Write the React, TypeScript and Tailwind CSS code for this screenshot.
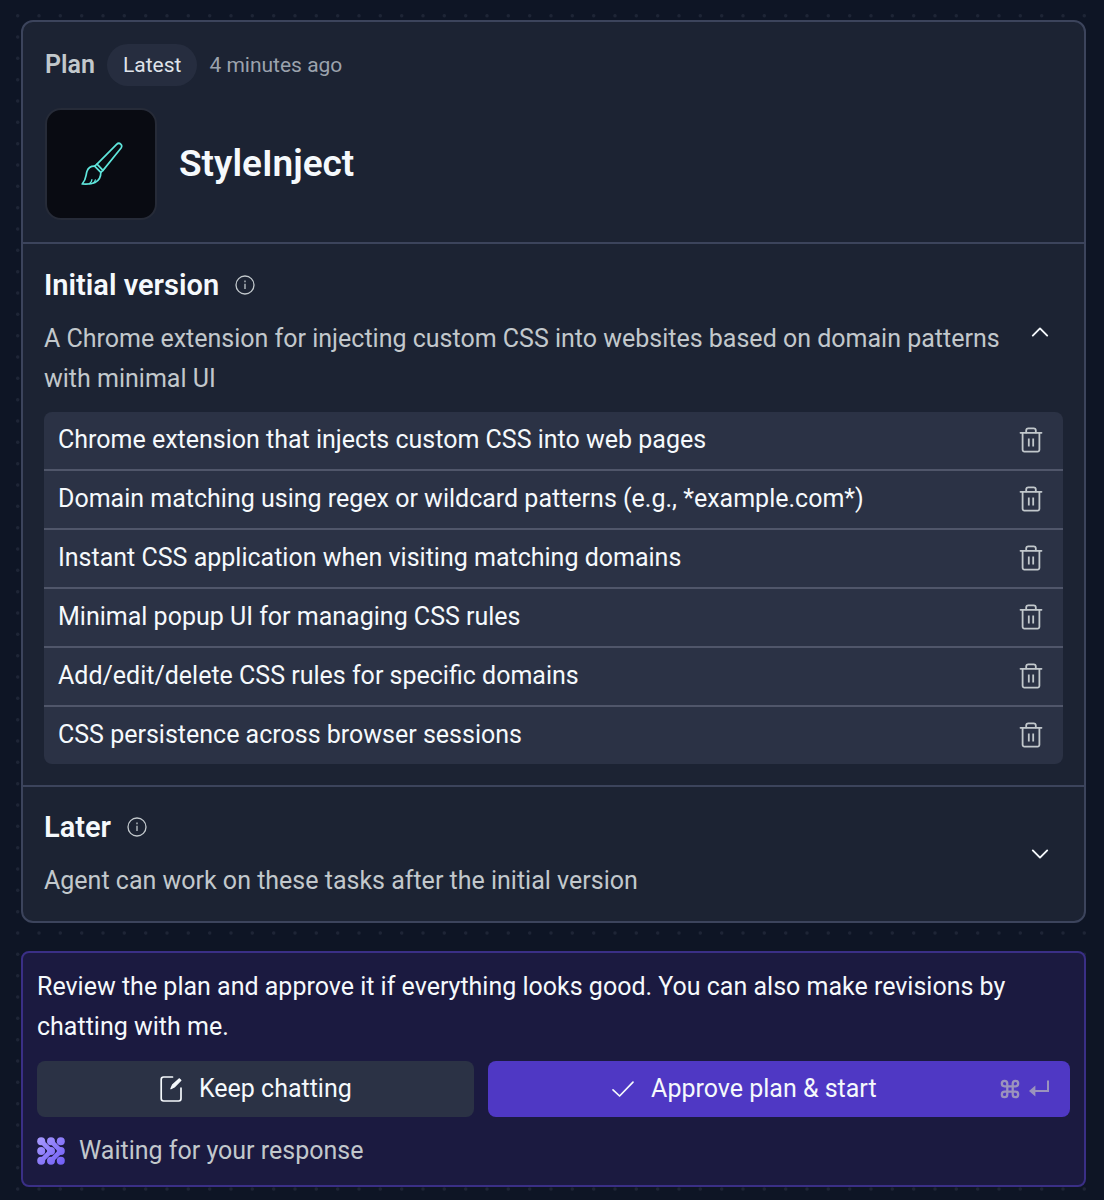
import React, { useState } from 'react';

const INITIAL_FEATURES = [
  'Chrome extension that injects custom CSS into web pages',
  'Domain matching using regex or wildcard patterns (e.g., *example.com*)',
  'Instant CSS application when visiting matching domains',
  'Minimal popup UI for managing CSS rules',
  'Add/edit/delete CSS rules for specific domains',
  'CSS persistence across browser sessions',
];

interface IconProps {
  className?: string;
}

const InfoIcon: React.FC<IconProps> = ({ className }) => (
  <svg viewBox="0 0 20 20" className={className} fill="none" stroke="currentColor" strokeWidth="1.3" aria-hidden="true">
    <circle cx="10" cy="10" r="9" />
    <path d="M10 8.8v5.2" />
    <path d="M10 5.6v1.6" />
  </svg>
);

const TrashIcon: React.FC<IconProps> = ({ className }) => (
  <svg viewBox="0 0 24 28" className={className} fill="none" stroke="currentColor" strokeWidth="1.8" strokeLinecap="round" strokeLinejoin="round" aria-hidden="true">
    <path d="M1.5 6.8h21" />
    <path d="M3.6 6.8v17a1.8 1.8 0 0 0 1.8 1.8h13.2a1.8 1.8 0 0 0 1.8-1.8v-17" />
    <path d="M7.2 6.4V4.6a2.2 2.2 0 0 1 2.2-2.2h5.2a2.2 2.2 0 0 1 2.2 2.2v1.8" />
    <path d="M9.8 12.4v8M14.2 12.4v8" strokeLinecap="butt" />
  </svg>
);

const ChevronIcon: React.FC<{ up?: boolean }> = ({ up }) => (
  <svg viewBox="0 0 20 12" className="w-5 h-3" fill="none" stroke="currentColor" strokeWidth="1.9" strokeLinecap="round" strokeLinejoin="round" aria-hidden="true">
    <path d={up ? 'M2.8 9.6 10 2.4l7.2 7.2' : 'M2.8 2.4 10 9.6l7.2-7.2'} />
  </svg>
);

const BrushIcon: React.FC<IconProps> = ({ className }) => (
  <svg viewBox="0 0 44 46" className={className} fill="none" stroke="#5fe6dc" strokeWidth="1.7" strokeLinecap="round" strokeLinejoin="round" aria-hidden="true">
    <path d="M18 23.2 37.6 3.4c1.2-1.2 3-1.300 4.100-.3s1.200 2.800.2 4.200L24 29.400z" />
    <path d="M18 23.200l-2.400 1.900 6.200 6.300 2.200-2" />
    <path d="M15.600 25.100c-3.600-.1-6.600 2-7.700 5.400-1.300 4.200-.4 7.800-4.700 12.500 3.900.3 9.300.2 12.900-1.600 3.800-2 5.800-5.600 5.700-10" />
    <path d="M10.500 42.600c1.500-1 2.300-2.300 2.400-4M14.600 41.800c1-.9 1.500-1.700 1.700-2.800" strokeWidth="1.300" />
  </svg>
);

const ComposeIcon: React.FC<IconProps> = ({ className }) => (
  <svg viewBox="0 0 24 28" className={className} fill="none" stroke="currentColor" strokeLinecap="round" strokeLinejoin="round" aria-hidden="true">
    <path d="M13.500 2H4.600a2.400 2.400 0 0 0-2.400 2.400v19.200A2.400 2.400 0 0 0 4.600 26h15a2.400 2.400 0 0 0 2.400-2.400V13.200" strokeWidth="1.700" />
    <path d="M11.900 13.800l1.600-3.800 6.900-6.200 1.500 1.500-6.600 6.700z" fill="currentColor" strokeWidth="1.200" />
  </svg>
);

const CheckIcon: React.FC<IconProps> = ({ className }) => (
  <svg viewBox="0 0 24 18" className={className} fill="none" stroke="currentColor" strokeWidth="1.7" strokeLinecap="round" strokeLinejoin="round" aria-hidden="true">
    <path d="M2 9.800 8.600 16 22 2.200" />
  </svg>
);

const CommandIcon: React.FC<IconProps> = ({ className }) => (
  <svg viewBox="0 0 22 22" className={className} fill="none" stroke="currentColor" strokeWidth="2.500" aria-hidden="true">
    <path d="M8 8H5a3 3 0 1 1 3-3zM14 8V5a3 3 0 1 1 3 3zM14 14h3a3 3 0 1 1-3 3zM8 14v3a3 3 0 1 1-3-3zM8 8h6v6H8z" />
  </svg>
);

const ReturnIcon: React.FC<IconProps> = ({ className }) => (
  <svg viewBox="0 0 22 18" className={className} fill="none" stroke="currentColor" strokeWidth="2" aria-hidden="true">
    <path d="M20 .5v10.500H5" />
    <path d="M7.400 5.400 1 11l6.400 5.600z" fill="currentColor" stroke="none" />
  </svg>
);

// 3x3 dots, some of them joined diagonally
const AgentIcon: React.FC<IconProps> = ({ className }) => (
  <svg viewBox="0 0 28 28" className={className} aria-hidden="true">
    <defs>
      <linearGradient id="agent" x1="0" y1="0" x2="28" y2="28" gradientUnits="userSpaceOnUse">
        <stop offset="0" stopColor="#a99bff" />
        <stop offset="1" stopColor="#6f5cf5" />
      </linearGradient>
    </defs>
    <g fill="url(#agent)">
      {[4.2, 14, 23.8].map(cy => [4.2, 14, 23.8].map(cx => (
        <circle key={`${cx}-${cy}`} cx={cx} cy={cy} r="4" />
      )))}
    </g>
    <path d="M4.200 4.200 14 14l-9.800 9.800M14 4.200l9.800 9.800-9.800 9.800" fill="none" stroke="url(#agent)" strokeWidth="4.600" />
  </svg>
);

// three dots per 64px in each direction
const DotGrid = () => (
  <svg className="absolute inset-0 w-full h-full" aria-hidden="true">
    <defs>
      <pattern id="dots" x="7" y="5" width="64" height="64" patternUnits="userSpaceOnUse">
        {[10.7, 32, 53.3].map(y => [10.7, 32, 53.3].map(x => (
          <circle key={`${x}-${y}`} cx={x} cy={y} r="1.7" fill="#1e2536" />
        )))}
      </pattern>
    </defs>
    <rect width="100%" height="100%" fill="url(#dots)" />
  </svg>
);

const App: React.FC = () => {
  const [features, setFeatures] = useState(INITIAL_FEATURES);
  const [initialOpen, setInitialOpen] = useState(true);
  const [laterOpen, setLaterOpen] = useState(false);

  const removeFeature = (feature: string) => {
    setFeatures(features.filter(f => f !== feature));
  };

  return (
    <div className="relative min-h-screen bg-[#0e1525] text-[#f5f9fc] font-['Roboto',sans-serif] text-[25px] leading-10">
      <DotGrid />
      <main className="relative pt-5 pb-3 pl-[21px] pr-[18px] flex flex-col gap-7">
        <article className="rounded-xl border-2 border-[#3c445c] bg-[#1c2333]">
          <header className="p-[22px]">
            <div className="flex items-center gap-3 text-[21px]">
              <span className="text-[25px] font-semibold text-[#c2c8cc]">Plan</span>
              <span className="rounded-full bg-[#2b3245]/70 px-4 py-px text-[#dfe3ea]">Latest</span>
              <span className="text-[#9ba2ad]">4 minutes ago</span>
            </div>
            <div className="mt-[22px] flex items-center gap-[22px]">
              <div className="flex size-28 items-center justify-center rounded-2xl border-2 border-[#262b38] bg-[#090b12]">
                <BrushIcon className="w-11 h-[46px]" />
              </div>
              <h1 className="text-[37px] font-semibold">StyleInject</h1>
            </div>
          </header>

          <section className="border-t-2 border-[#3c445c] p-[21px]">
            <div className="flex items-center gap-2">
              <div className="flex-1">
                <h2 className="flex items-center gap-4 text-[29px] font-semibold">
                  Initial version
                  <InfoIcon className="size-5 text-[#c2c8cc]" />
                </h2>
                <p className="mt-[14px] text-[#c2c8cc]">
                  A Chrome extension for injecting custom CSS into websites based on domain patterns with minimal UI
                </p>
              </div>
              <button type="button" aria-label="Toggle initial version" aria-expanded={initialOpen} onClick={() => setInitialOpen(!initialOpen)} className="px-[13px] py-4">
                <ChevronIcon up={initialOpen} />
              </button>
            </div>
            {initialOpen && (
              <ul className="mt-[13px] divide-y-2 divide-[#50566a] overflow-hidden rounded-lg bg-[#2b3245]">
                {features.map(feature => (
                  <li key={feature} className="flex items-center justify-between px-[14px] pt-2 pb-[9px]">
                    <span>{feature}</span>
                    <button type="button" aria-label={`Delete ${feature}`} onClick={() => removeFeature(feature)} className="px-[6px] text-[#c2c8cc]">
                      <TrashIcon className="w-6 h-7" />
                    </button>
                  </li>
                ))}
              </ul>
            )}
          </section>

          <section className="flex items-center gap-2 border-t-2 border-[#3c445c] px-[21px] py-5">
            <div className="flex-1">
              <h2 className="flex items-center gap-4 text-[29px] font-semibold">
                Later
                <InfoIcon className="size-5 text-[#c2c8cc]" />
              </h2>
              <p className="mt-[14px] text-[#c2c8cc]">Agent can work on these tasks after the initial version</p>
            </div>
            <button type="button" aria-label="Toggle later" aria-expanded={laterOpen} onClick={() => setLaterOpen(!laterOpen)} className="px-[13px] py-4">
              <ChevronIcon up={laterOpen} />
            </button>
          </section>
        </article>

        <section className="rounded-lg border-2 border-[#3a2f86] bg-[#1b1a40] p-[14px]">
          <p>Review the plan and approve it if everything looks good. You can also make revisions by chatting with me.</p>
          <div className="mt-[14px] grid grid-cols-[3fr_4fr] gap-[14px]">
            <button type="button" className="flex items-center justify-center gap-4 rounded-lg bg-[#2b3245] py-2">
              <ComposeIcon className="w-6 h-7" />
              Keep chatting
            </button>
            <button type="button" className="flex items-center rounded-lg bg-[#4f38c4] py-2 pr-5">
              <span className="flex flex-1 items-center justify-center gap-4">
                <CheckIcon className="w-6 h-[18px]" />
                Approve plan &amp; start
              </span>
              <span className="flex items-center gap-2 text-[#9b93bd]">
                <CommandIcon className="size-5" />
                <ReturnIcon className="w-[22px] h-[18px]" />
              </span>
            </button>
          </div>
          <div className="mt-[14px] flex items-center gap-[14px] text-[#c2c8cc]">
            <AgentIcon className="size-7" />
            Waiting for your response
          </div>
        </section>
      </main>
    </div>
  );
};

export default App;
